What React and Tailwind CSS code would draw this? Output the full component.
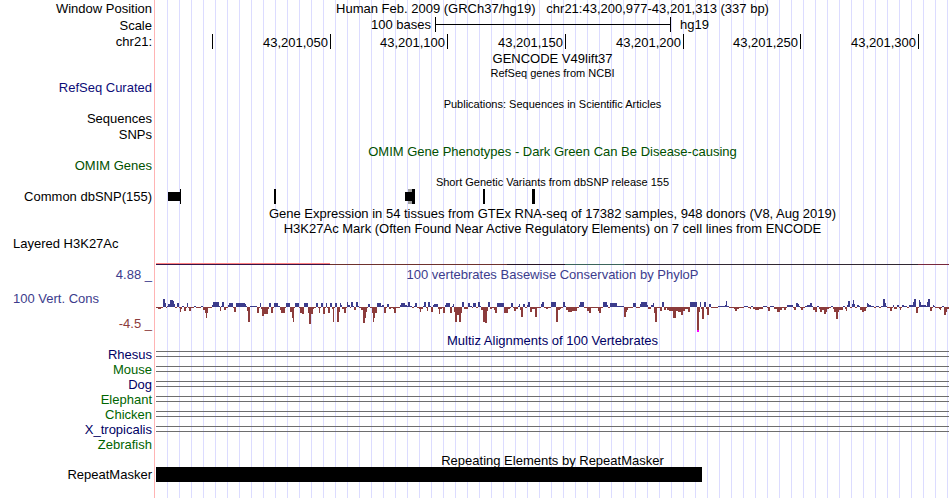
import React from 'react';
import clsx from 'clsx';

// drawing width of a track, in viewBox units
const TRACK_WIDTH = 793;

const rulerTicks = [
  { label: '', grow: 'flex-[57]' },
  { label: '43,201,050', grow: 'flex-[118]' },
  { label: '43,201,100', grow: 'flex-[117]' },
  { label: '43,201,150', grow: 'flex-[118]' },
  { label: '43,201,200', grow: 'flex-[118]' },
  { label: '43,201,250', grow: 'flex-[117]' },
  { label: '43,201,300', grow: 'flex-[118]' },
];

const species = [
  { name: 'Rhesus', color: 'text-[#000064]', aligned: true },
  { name: 'Mouse', color: 'text-[#006400]', aligned: true },
  { name: 'Dog', color: 'text-[#000064]', aligned: true },
  { name: 'Elephant', color: 'text-[#006400]', aligned: true },
  { name: 'Chicken', color: 'text-[#006400]', aligned: true },
  { name: 'X_tropicalis', color: 'text-[#000064]', aligned: true },
  { name: 'Zebrafish', color: 'text-[#006400]', aligned: false },
];

// [x, width, y, height, fill]
const snps = [
  [12, 12, 3, 9, '#000000'],
  [24, 1, 0, 15, '#000000'],
  [118, 2, 0, 15, '#000000'],
  [252, 4, 0, 15, '#a0a0a0'],
  [249, 7, 3, 9, '#000000'],
  [256, 3, 0, 15, '#000000'],
  [327, 2, 0, 15, '#000000'],
  [376, 3, 0, 15, '#000000'],
];

// [x, width, fill]
const histone = [
  [0, 174, '#371446'],
  [174, 177, '#6e322d'],
  [351, 58, '#281423'],
  [409, 60, '#3c645a'],
  [469, 293, '#322832'],
  [762, 31, '#78283c'],
];

// phyloP steps as [start, height]; each step runs up to the next start
const phyloP = [
  [0, -1], [2, -2], [5, -1], [7, 8], [9, 4], [10, -1], [11, 1], [12, 3], [14, 7], [17, 6], [18, 3],
  [19, -1], [21, 4], [23, -1], [24, -5], [25, -2], [26, 1], [28, -4], [30, -1], [31, 4], [32, -1],
  [33, -4], [35, -1], [38, 1], [40, -1], [45, 1], [47, -3], [49, -6], [50, -11], [51, -6], [52, -1],
  [56, 2], [57, 5], [63, 1], [64, -4], [65, 1], [66, 5], [68, -3], [70, -1], [72, 2], [73, 4],
  [77, -1], [78, -5], [80, 4], [89, 3], [90, 1], [91, -4], [92, -15], [94, 1], [101, -6], [103, -1],
  [104, 4], [105, -2], [106, -9], [108, -7], [112, -2], [113, 4], [115, -6], [117, -1], [118, 4],
  [122, 1], [124, -3], [125, -6], [129, -1], [130, 4], [134, -5], [136, -11], [137, -15], [138, -1],
  [139, 4], [143, -1], [144, -6], [146, -7], [148, 4], [152, -6], [153, -17], [155, -7], [157, -2],
  [158, -1], [160, 4], [162, -1], [163, -6], [164, -1], [165, 4], [167, -7], [169, -1], [170, 4],
  [171, -1], [172, -6], [174, 4], [176, -2], [177, -15], [178, -1], [179, 4], [181, -15], [183, -5],
  [184, 4], [185, 2], [186, -2], [188, -6], [190, -1], [191, 5], [192, 2], [194, -1], [195, 5],
  [197, 1], [198, -3], [200, 5], [202, 1], [203, -1], [205, -3], [207, -16], [209, -11], [210, -5],
  [211, -1], [212, 3], [214, -1], [216, -6], [217, -15], [218, -11], [219, -6], [221, 4], [225, 1],
  [226, 2], [228, -6], [230, -1], [231, 3], [233, -2], [235, -1], [237, -2], [238, -6], [240, -1],
  [244, 2], [245, 4], [249, 2], [251, 1], [252, 5], [254, 1], [256, -1], [258, 1], [259, 4],
  [261, -1], [263, -2], [264, -5], [265, -2], [267, 1], [268, 5], [270, -1], [271, -4], [272, 5],
  [274, 1], [275, -5], [277, 2], [278, 3], [282, -2], [283, -7], [284, -2], [286, -1], [287, -6],
  [289, 2], [290, 4], [294, -6], [296, 1], [297, 3], [298, -5], [299, -15], [301, -8], [303, -15],
  [305, -6], [306, 5], [308, -2], [312, 4], [314, 1], [316, -1], [317, 4], [320, -1], [322, 5],
  [324, 1], [325, -3], [327, -15], [329, -16], [331, -4], [332, 5], [334, -2], [336, -1], [338, -3],
  [339, -6], [341, 4], [348, -6], [352, -2], [354, -1], [355, 4], [357, -1], [358, -4], [360, -2],
  [362, 1], [363, 3], [364, -3], [365, -10], [367, 3], [369, -1], [371, 2], [372, 5], [374, -5],
  [376, -2], [379, -10], [381, -1], [385, 3], [386, 5], [388, -1], [390, -2], [392, -1], [395, 5],
  [400, -15], [402, -3], [404, -2], [405, -1], [407, 5], [409, 1], [410, -3], [412, -5], [416, -4],
  [421, -1], [423, 2], [424, 5], [428, -1], [431, -4], [433, -6], [435, -1], [442, -4], [443, -6],
  [445, -1], [447, 5], [451, 2], [452, -1], [454, 4], [461, 1], [468, -10], [470, -5], [471, -3],
  [472, -1], [477, 4], [480, -1], [484, 3], [485, 5], [491, 2], [492, -2], [495, 2], [497, 4],
  [498, -6], [499, -15], [501, -1], [504, -4], [506, 5], [508, -3], [510, -1], [511, -3], [513, -4],
  [517, -11], [520, -4], [522, -5], [525, -8], [527, -4], [529, -2], [532, -5], [534, 5],
  [541, -25], [543, -5], [544, 5], [545, -2], [546, -12], [548, 5], [550, -2], [551, -8], [553, 3],
  [555, -1], [562, 1], [569, 2], [570, 6], [571, 1], [573, -1], [578, -2], [579, -4], [581, -2],
  [583, -1], [588, 1], [592, -1], [594, -2], [595, 1], [597, -2], [599, -3], [603, -2], [607, 1],
  [611, -1], [612, -4], [614, 1], [618, -2], [621, -5], [624, -3], [626, -1], [628, -3], [630, -1],
  [631, 2], [637, -1], [638, -3], [640, 4], [642, 3], [643, 1], [644, -1], [645, -3], [647, -1],
  [649, 1], [651, 2], [654, 4], [656, 1], [657, -3], [659, -5], [661, 1], [663, -2], [664, -5],
  [666, -3], [668, -7], [670, -5], [671, -2], [673, -1], [675, 1], [677, -2], [678, -5], [680, -12],
  [682, -5], [683, -3], [687, 1], [689, -2], [690, -4], [691, 2], [692, 6], [694, -1], [696, 3],
  [697, 7], [698, 3], [699, -1], [701, 2], [703, 1], [704, -3], [706, -5], [708, -4], [710, -1],
  [711, 4], [712, 3], [713, 2], [715, 1], [718, -1], [720, 1], [723, -1], [725, 1], [727, 8],
  [729, 4], [730, 1], [731, -1], [734, -4], [736, -1], [737, 2], [738, -2], [741, 2], [743, -1],
  [744, -3], [745, -1], [746, 2], [748, 1], [751, -1], [753, 2], [757, 5], [758, 8], [760, -6],
  [762, -1], [763, 7], [764, 5], [765, 2], [770, 1], [771, 5], [772, 8], [774, -4], [776, -1],
  [777, 2], [778, 1], [779, -1], [783, -2], [784, -3], [785, -1], [786, 1], [788, -8], [790, -5],
  [791, -2],
];

const Drawing = ({ height, className, label, children }) => (
  <svg
    viewBox={`0 0 ${TRACK_WIDTH} ${height}`}
    preserveAspectRatio="none"
    shapeRendering="crispEdges"
    role="img"
    aria-label={label}
    className={clsx('block w-full', className)}
  >
    {children}
  </svg>
);

const Row = ({ height = 'h-4', label, labelClass = 'text-black', children }) => (
  <div className={clsx('flex', height)}>
    <div className={clsx('w-[154px] shrink-0 flex flex-col justify-center pr-0.5 text-right', labelClass)}>
      {label}
    </div>
    <div className="flex-1 min-w-0 border-l border-[#ffb4b4] px-px">
      <div className="h-full bg-[linear-gradient(to_right,transparent_11px,#dcdcff_11px)] bg-[length:12px_100%]">
        {children}
      </div>
    </div>
  </div>
);

const Title = ({ className, children }) => (
  <div className={clsx('flex h-full items-center justify-center whitespace-pre', className)}>
    {children}
  </div>
);

const Conservation = () => (
  <Drawing height={51} className="h-[51px]" label="100 vertebrates conservation">
    {phyloP.map(([x, value], i) => {
      const end = i + 1 < phyloP.length ? phyloP[i + 1][0] : TRACK_WIDTH;
      return (
        <rect
          key={x}
          x={x}
          y={value > 0 ? 25 - value : 25}
          width={end - x}
          height={Math.abs(value)}
          fill={value > 0 ? '#3c3c8c' : '#8c3c3c'}
        />
      );
    })}
    <rect x="541" y="48" width="2" height="2" fill="#ff00ff" />
  </Drawing>
);

const App = () => {
  return (
    <main className="w-full overflow-hidden bg-white font-['Liberation_Sans',Arial,sans-serif] text-[13px] leading-[15px] text-black">
      <Row height="h-[17px]" label="Window Position">
        <Title>{'Human Feb. 2009 (GRCh37/hg19)   chr21:43,200,977-43,201,313 (337 bp)'}</Title>
      </Row>
      <Row height="h-[17px]" label="Scale">
        <div className="flex h-[15px]">
          <div className="flex-[279] text-right">
            <span className="pr-1">100 bases</span>
          </div>
          <div className="flex flex-[236] items-center">
            <div className="h-full w-px bg-black" />
            <div className="h-px flex-1 bg-black" />
            <div className="h-full w-px bg-black" />
          </div>
          <div className="flex-[278]">
            <span className="pl-[9px]">hg19</span>
          </div>
        </div>
      </Row>
      <Row label="chr21:" labelClass="pb-0.5">
        <div className="flex h-[15px]">
          {rulerTicks.map((tick) => (
            <div key={tick.grow + tick.label} className={clsx('flex min-w-0 justify-end gap-0.5', tick.grow)}>
              <span className="pt-px">{tick.label}</span>
              <div className="h-full w-px bg-black" />
            </div>
          ))}
          <div className="flex-[30]" />
        </div>
      </Row>

      <Row>
        <Title>GENCODE V49lift37</Title>
      </Row>
      <Row height="h-[14px]">
        <Title className="text-[11px]">RefSeq genes from NCBI</Title>
      </Row>
      <Row label="RefSeq Curated" labelClass="pb-0.5 text-[#0c0c78]" />
      <Row>
        <Title className="text-[11px]">Publications: Sequences in Scientific Articles</Title>
      </Row>
      <Row height="h-[14px]" label="Sequences" labelClass="pb-0.5" />
      <Row height="h-[18px]" label="SNPs" labelClass="pb-0.5" />
      <Row height="h-[15px]">
        <Title className="text-[#005000]">OMIM Gene Phenotypes - Dark Green Can Be Disease-causing</Title>
      </Row>
      <Row height="h-[14px]" label="OMIM Genes" labelClass="pb-0.5 text-[#005000]" />

      <Row>
        <Title className="pt-0.5 text-[11px]">Short Genetic Variants from dbSNP release 155</Title>
      </Row>
      <Row height="h-[15px]" label="Common dbSNP(155)">
        <Drawing height={15} className="h-[15px]" label="Common dbSNP variants">
          {snps.map(([x, width, y, height, fill]) => (
            <rect key={x} x={x} y={y} width={width} height={height} fill={fill} />
          ))}
        </Drawing>
      </Row>

      <Row height="h-[17px]">
        <Title className="pt-0.5">
          Gene Expression in 54 tissues from GTEx RNA-seq of 17382 samples, 948 donors (V8, Aug 2019)
        </Title>
      </Row>
      <Row height="h-[15px]">
        <Title>H3K27Ac Mark (Often Found Near Active Regulatory Elements) on 7 cell lines from ENCODE</Title>
      </Row>
      <Row
        height="h-[30px]"
        labelClass="pb-4"
        label={<span className="pl-[13px] text-left">Layered H3K27Ac</span>}
      >
        <Drawing height={30} className="h-[30px]" label="H3K27Ac signal">
          <rect x="0" y="27" width="174" height="1" fill="#ff8080" />
          {histone.map(([x, width, fill]) => (
            <rect key={x} x={x} y="28" width={width} height="1" fill={fill} />
          ))}
        </Drawing>
      </Row>

      <Row label="4.88 _" labelClass="text-[#3c3c8c]">
        <Title className="text-[#3c3c8c]">100 vertebrates Basewise Conservation by PhyloP</Title>
      </Row>
      <Row
        height="h-[51px]"
        label={
          <>
            <span className="mt-auto pl-[13px] text-left text-[#3c3c8c]">100 Vert. Cons</span>
            <span className="mt-2.5 mb-0.5 text-[#8c3c3c]">-4.5 _</span>
          </>
        }
      >
        <Conservation />
      </Row>

      <Row height="h-[14px]">
        <Title className="text-[#000064]">Multiz Alignments of 100 Vertebrates</Title>
      </Row>
      {species.map((s) => (
        <Row key={s.name} height="h-[15px]" label={s.name} labelClass={s.color}>
          {s.aligned && (
            <div className="pt-1">
              <div className="h-1.5 border-y border-[#6e6e6e]" />
            </div>
          )}
        </Row>
      ))}

      <Row height="h-[15px]">
        <Title className="pt-0.5">Repeating Elements by RepeatMasker</Title>
      </Row>
      <Row height="h-[15px]" label="RepeatMasker">
        <Drawing height={15} className="h-[15px]" label="Repeat element">
          <rect x="0" y="0" width="546" height="15" fill="#000000" />
        </Drawing>
      </Row>
      <Row />
    </main>
  );
};

export default App;
